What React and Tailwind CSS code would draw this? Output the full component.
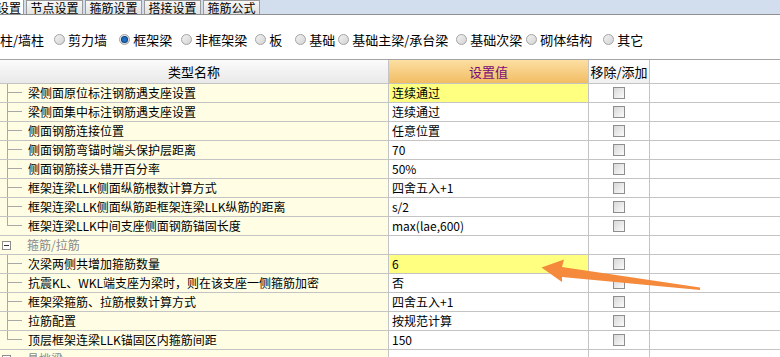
import React from 'react';

const TABS = ['节点设置', '箍筋设置', '搭接设置', '箍筋公式'];

const RADIOS = [
  { label: '剪力墙', ml: 'ml-[10px]' },
  { label: '框架梁', ml: 'ml-[12px]', checked: true },
  { label: '非框架梁', ml: 'ml-[9px]' },
  { label: '板', ml: 'ml-[8px]' },
  { label: '基础', ml: 'ml-[13px]' },
  { label: '基础主梁/承台梁', ml: 'ml-[3px]' },
  { label: '基础次梁', ml: 'ml-[8px]' },
  { label: '砌体结构', ml: 'ml-[4px]' },
  { label: '其它', ml: 'ml-[11px]' },
];

// kind: item | last | group
const ROWS = [
  { kind: 'item', name: '梁侧面原位标注钢筋遇支座设置', value: '连续通过', hl: true },
  { kind: 'item', name: '梁侧面集中标注钢筋遇支座设置', value: '连续通过' },
  { kind: 'item', name: '侧面钢筋连接位置', value: '任意位置' },
  { kind: 'item', name: '侧面钢筋弯锚时端头保护层距离', value: '70' },
  { kind: 'item', name: '侧面钢筋接头错开百分率', value: '50%' },
  { kind: 'item', name: '框架连梁LLK侧面纵筋根数计算方式', value: '四舍五入+1' },
  { kind: 'item', name: '框架连梁LLK侧面纵筋距框架连梁LLK纵筋的距离', value: 's/2' },
  { kind: 'last', name: '框架连梁LLK中间支座侧面钢筋锚固长度', value: 'max(lae,600)' },
  { kind: 'group', name: '箍筋/拉筋' },
  { kind: 'item', name: '次梁两侧共增加箍筋数量', value: '6', hl: true },
  { kind: 'item', name: '抗震KL、WKL端支座为梁时，则在该支座一侧箍筋加密', value: '否' },
  { kind: 'item', name: '框架梁箍筋、拉筋根数计算方式', value: '四舍五入+1' },
  { kind: 'item', name: '拉筋配置', value: '按规范计算' },
  { kind: 'last', name: '顶层框架连梁LLK锚固区内箍筋间距', value: '150' },
  { kind: 'group', name: '悬挑梁' },
];

function Radio({ checked }) {
  return (
    <span className="inline-flex h-[11px] w-[11px] items-center justify-center rounded-full border border-[#a3a3a3] bg-gradient-to-br from-[#f2f2f2] to-[#d4d4d4]">
      {checked && (
        <span className="h-[5px] w-[5px] rounded-full bg-[#1d6fc4] ring-1 ring-[#0b3f7a]" />
      )}
    </span>
  );
}

function Checkbox() {
  return (
    <span className="block h-[12px] w-[12px] border border-[#8e8e8e] bg-gradient-to-br from-[#d8d8d8] to-[#fbfbfb]" />
  );
}

function TreeLine({ last }) {
  return (
    <div className="ml-[7px] flex w-[15px] shrink-0 flex-col self-stretch">
      <div className="h-[9px] border-b border-l border-[#a8a8a8]" />
      <div className={`flex-1 ${last ? '' : 'border-l border-[#a8a8a8]'}`} />
    </div>
  );
}

function Row({ row }) {
  if (row.kind === 'group') {
    return (
      <div className="flex h-[19px] border-b border-[#c4c4c4]">
        <div className="flex w-[389px] shrink-0 items-center border-r border-[#c4c4c4] bg-[#fffee4]">
          <span className="ml-[2px] flex h-[9px] w-[9px] items-center justify-center border border-[#8c8c8c] bg-white">
            <span className="h-[1px] w-[5px] bg-[#333]" />
          </span>
          <span className="ml-[16px] text-[#8a8a8a]">{row.name}</span>
        </div>
        <div className="w-[200px] shrink-0 border-r border-[#c4c4c4] bg-white" />
        <div className="w-[61px] shrink-0 border-r border-[#c4c4c4] bg-white" />
      </div>
    );
  }
  return (
    <div className="flex h-[19px] border-b border-[#c4c4c4]">
      <div className="flex w-[389px] shrink-0 items-center border-r border-[#c4c4c4] bg-[#fffee4]">
        <TreeLine last={row.kind === 'last'} />
        <span className="ml-[6px] text-black">{row.name}</span>
      </div>
      <div
        className={`flex w-[200px] shrink-0 items-center border-r border-[#c4c4c4] pl-[3px] text-black ${
          row.hl ? 'bg-[#ffff80]' : 'bg-white'
        }`}
      >
        {row.value}
      </div>
      <div className="flex w-[61px] shrink-0 items-center justify-center border-r border-[#c4c4c4] bg-white">
        <Checkbox />
      </div>
    </div>
  );
}

export default function App() {
  return (
    <div
      className="relative h-[357px] w-[780px] overflow-hidden bg-white text-[12px] leading-none text-black"
      style={{ fontFamily: '"Noto Sans CJK SC", "Liberation Sans", sans-serif' }}
    >
      {/* tab strip */}
      <div className="flex h-[15px] items-end border-b border-[#8f8f8f] bg-[#d2deee] text-[12px] leading-[13px]">
        <div className="-ml-[5px] flex h-[14px] w-[29px] items-center justify-center border-r border-[#9a9a9a] bg-white">
          设置
        </div>
        {TABS.map((t) => (
          <div
            key={t}
            className="ml-[2px] flex h-[14px] w-[57px] items-center justify-center border-x border-t border-[#9a9a9a] bg-gradient-to-b from-[#f7f7f7] to-[#e2e2e2]"
          >
            {t}
          </div>
        ))}
      </div>

      {/* component type radios */}
      <div className="flex h-[44px] items-center pt-[4px] text-[13px]">
        <span>柱/墙柱</span>
        {RADIOS.map((r) => (
          <span key={r.label} className={`flex items-center ${r.ml}`}>
            <Radio checked={r.checked} />
            <span className="ml-[3px]">{r.label}</span>
          </span>
        ))}
      </div>

      {/* table */}
      <div className="border-t border-[#a4a4a4]">
        <div className="flex h-[24px] border-b border-[#c4c4c4]">
          <div className="flex w-[389px] shrink-0 items-center justify-center border-r border-[#c4c4c4] bg-gradient-to-b from-[#fbfbfb] to-[#e9e9e9] text-[13px]">
            类型名称
          </div>
          <div className="flex w-[200px] shrink-0 items-center justify-center border-r border-[#c4c4c4] bg-gradient-to-b from-[#fcdfa2] to-[#f1bd62] text-[13px] text-[#7a0a78]">
            设置值
          </div>
          <div className="flex w-[61px] shrink-0 items-center justify-center border-r border-[#c4c4c4] bg-gradient-to-b from-[#ffffff] to-[#f0f0f0] text-[13px]">
            移除/添加
          </div>
        </div>
        {ROWS.map((row, i) => (
          <Row key={i} row={row} />
        ))}
      </div>

      {/* annotation arrow */}
      <svg className="absolute left-0 top-0" width="780" height="357" viewBox="0 0 780 357">
        <polygon
          points="541.5,267.5 564,259.5 562,267 700,287.5 700,290 562,277 562,282"
          fill="#f58a3d"
        />
      </svg>
    </div>
  );
}
